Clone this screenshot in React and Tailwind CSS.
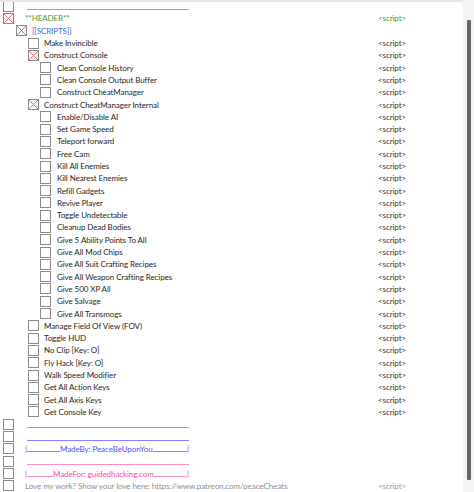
import React from 'react';

const rows = [
  { lvl: 0, line: 'green' },
  { lvl: 0, text: '**HEADER**', color: 'text-[#3a9a3a]', checked: true, script: 'text-[#3a9a3a]' },
  { lvl: 1, text: '[[SCRIPTS]]', color: 'text-[#3d6bd4]', checked: true },
  { lvl: 2, text: 'Make Invincible', script: true },
  { lvl: 2, text: 'Construct Console', checked: true, script: true },
  { lvl: 3, text: 'Clean Console History', script: true },
  { lvl: 3, text: 'Clean Console Output Buffer', script: true },
  { lvl: 3, text: 'Construct CheatManager', script: true },
  { lvl: 2, text: 'Construct CheatManager Internal', checked: true, script: true },
  { lvl: 3, text: 'Enable/Disable AI', script: true },
  { lvl: 3, text: 'Set Game Speed', script: true },
  { lvl: 3, text: 'Teleport forward', script: true },
  { lvl: 3, text: 'Free Cam', script: true },
  { lvl: 3, text: 'Kill All Enemies', script: true },
  { lvl: 3, text: 'Kill Nearest Enemies', script: true },
  { lvl: 3, text: 'Refill Gadgets', script: true },
  { lvl: 3, text: 'Revive Player', script: true },
  { lvl: 3, text: 'Toggle Undetectable', script: true },
  { lvl: 3, text: 'Cleanup Dead Bodies', script: true },
  { lvl: 3, text: 'Give 5 Ability Points To All', script: true },
  { lvl: 3, text: 'Give All Mod Chips', script: true },
  { lvl: 3, text: 'Give All Suit Crafting Recipes', script: true },
  { lvl: 3, text: 'Give All Weapon Crafting Recipes', script: true },
  { lvl: 3, text: 'Give 500 XP All', script: true },
  { lvl: 3, text: 'Give Salvage', script: true },
  { lvl: 3, text: 'Give All Transmogs', script: true },
  { lvl: 2, text: 'Manage Field Of View (FOV)', script: true },
  { lvl: 2, text: 'Toggle HUD', script: true },
  { lvl: 2, text: 'No Clip [Key: O]', script: true },
  { lvl: 2, text: 'Fly Hack [Key: O]', script: true },
  { lvl: 2, text: 'Walk Speed Modifier', script: true },
  { lvl: 2, text: 'Get All Action Keys', script: true },
  { lvl: 2, text: 'Get All Axis Keys', script: true },
  { lvl: 2, text: 'Get Console Key', script: true },
  { lvl: 0, line: 'green' },
  { lvl: 0, line: 'blue' },
  { lvl: 0, credit: 'blue', text: 'MadeBy: PeaceBeUponYou' },
  { lvl: 0, line: 'pink' },
  { lvl: 0, credit: 'pink', text: 'MadeFor: guidedhacking.com' },
  { lvl: 0, text: 'Love my work? Show your love here:  https://www.patreon.com/peaceCheats', color: 'text-[#8f8f8f]', script: 'text-[#9a9a9a]' },
];

// where the box sits and where the description starts, per tree level
const indent = [
  { wrap: 'w-[25px]', box: 'ml-[3px]' },
  { wrap: 'w-[32px]', box: 'ml-[16px]' },
  { wrap: 'w-[44px]', box: 'ml-[28px]' },
  { wrap: 'w-[57px]', box: 'ml-[40px]' },
];

const lineColor = {
  green: 'bg-[#79bd79]',
  blue: 'bg-[#8484ff]',
  pink: 'bg-[#ff8cc6]',
};

function Box({ checked }) {
  return (
    <div className="w-[11px] h-[11px] border border-[#8c8c8c] bg-white shrink-0 relative">
      {checked && (
        <svg viewBox="0 0 9 9" width="9" height="9" className="absolute left-0 top-0">
          <path d="M0 0L9 9M9 0L0 9" stroke="#e46f6f" strokeWidth="1" fill="none" />
        </svg>
      )}
    </div>
  );
}

function Credit({ kind, text }) {
  const txt = kind === 'blue' ? 'text-[#4f4fff]' : 'text-[#ff45a3]';
  const first = kind === 'blue' ? 'w-[33px]' : 'w-[26px]';
  return (
    <div className={`flex items-end w-[164px] h-full pb-[2px] ${txt}`}>
      <span className="leading-none">|</span>
      <span className={`${first} h-[1px] ${lineColor[kind]} mb-[1px]`} />
      <span className="leading-none whitespace-nowrap">{text}</span>
      <span className={`flex-1 h-[1px] ${lineColor[kind]} mb-[1px]`} />
      <span className="leading-none">|</span>
    </div>
  );
}

function Row({ r }) {
  const ind = indent[r.lvl];
  return (
    <div className="h-[12.3px] flex items-center relative">
      <div className={`${ind.wrap} shrink-0 flex items-center`}>
        <div className={ind.box}>
          <Box checked={r.checked} />
        </div>
      </div>
      <div className="flex-1 h-full flex items-center min-w-0">
        {r.line && <div className={`w-[162px] h-[1px] mt-[7px] ml-[2px] ${lineColor[r.line]}`} />}
        {r.credit && <Credit kind={r.credit} text={r.text} />}
        {!r.line && !r.credit && (
          <span className={`whitespace-nowrap ${r.color || 'text-[#262626]'}`}>{r.text}</span>
        )}
      </div>
      {r.script && (
        <span className={`absolute left-[378px] ${typeof r.script === 'string' ? r.script : 'text-[#333333]'}`}>
          &lt;script&gt;
        </span>
      )}
    </div>
  );
}

export default function App() {
  return (
    <div className="w-[474px] h-[492px] bg-white relative overflow-hidden flex text-[8px] tracking-[-0.08px] leading-none" style={{ fontFamily: 'Lato, "Open Sans", sans-serif' }}>
      <div className="flex-1 flex flex-col">
        {rows.map((r, i) => (
          <Row key={i} r={r} />
        ))}
      </div>
      <div className="w-[11px] h-full bg-[#f3f3f3] flex flex-col items-center pt-[20px] pb-[12px]">
        <div className="w-[4px] flex-1 bg-[#666666] rounded-[1px]" />
      </div>
      <div className="absolute top-0 left-0 w-[463px] h-[2px] bg-[#ebe5e8]" />
    </div>
  );
}
